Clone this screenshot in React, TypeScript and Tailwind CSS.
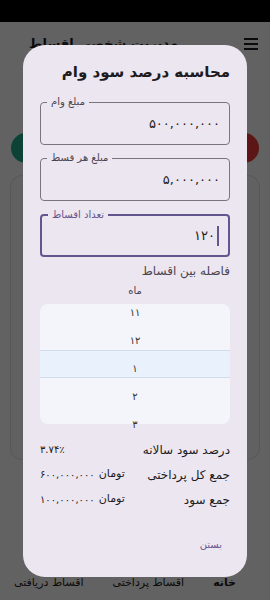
import React from 'react';

const font = { fontFamily: '"DejaVu Sans", sans-serif' };

interface FieldProps {
  label: string;
  value: string;
  focused?: boolean;
}

const Field: React.FC<FieldProps> = ({ label, value, focused }) => (
  <div
    className={`relative h-[43px] rounded-[4px] ${
      focused ? 'border-2 border-[#65558f]' : 'border border-[#79747e]'
    }`}
  >
    <span
      className={`absolute top-[-9px] left-[6px] px-[4px] bg-[#ece6f0] text-[10px] leading-[16px] ${
        focused ? 'text-[#65558f]' : 'text-[#49454f]'
      }`}
    >
      {label}
    </span>
    <div dir="ltr" className="flex h-full items-center justify-end pr-[9px]">
      <span className="text-[13px] text-[#1d1b20]">{value}</span>
      {focused && <span className="ml-[2px] h-[20px] w-[2px] bg-[#65558f]" />}
    </div>
  </div>
);

const ResultRow: React.FC<{ label: string; value: string; unit?: string }> = ({ label, value, unit }) => (
  <div className="flex h-[25px] items-center justify-between">
    <span className="text-[12px] text-[#1d1b20]">{label}</span>
    <span dir="ltr" className="flex items-center gap-[4px] text-[10px] text-[#1d1b20]">
      <span>{value}</span>
      {unit && <span className="text-[11px]">{unit}</span>}
    </span>
  </div>
);

const months = ['۱۱', '۱۲', '۱', '۲', '۳'];

export default function App() {
  return (
    <div className="relative h-[600px] w-[270px] overflow-hidden bg-[#f6f5f7]" style={font}>
      {/* status bar */}
      <div className="h-[22px] bg-black" />

      {/* app underneath */}
      <div dir="rtl" className="flex h-[44px] items-center px-[12px]">
        <div className="flex w-[14px] flex-col gap-[3px]">
          <span className="h-[2px] bg-[#1d1b20]" />
          <span className="h-[2px] bg-[#1d1b20]" />
          <span className="h-[2px] bg-[#1d1b20]" />
        </div>
        <span className="mr-[66px] text-[13px] font-bold text-[#1d1b20]">مدیریت شخصی اقساط</span>
      </div>

      <div className="mt-[67px] flex justify-between px-[11px]">
        <div className="h-[30px] w-[30px] rounded-full bg-[#22a589]" />
        <div className="h-[30px] w-[30px] rounded-full bg-[#e53935]" />
      </div>

      <div className="mx-[10px] mt-[12px] h-[285px] rounded-[12px] border border-[#d9d6dc] bg-[#f3f2f5]" />

      <div dir="rtl" className="absolute bottom-0 left-0 right-0 flex h-[34px] items-center justify-between pl-[14px] pr-[34px] text-[11px] text-[#1d1b20]">
        <span className="font-bold">خانه</span>
        <span>اقساط پرداختی</span>
        <span>اقساط دریافتی</span>
      </div>

      {/* scrim + dialog */}
      <div className="absolute bottom-0 left-0 right-0 top-[22px] flex items-center justify-center bg-black/60">
        <div dir="rtl" className="flex h-[532px] w-[224px] flex-col rounded-[22px] bg-[#ece6f0] px-[17px] pt-[16px]">
          <h2 className="text-[15px] font-bold leading-[22px] text-[#1d1b20]">محاسبه درصد سود وام</h2>

          <div className="mt-[19px] flex flex-col gap-[13px]">
            <Field label="مبلغ وام" value="۵۰۰,۰۰۰,۰۰۰" />
            <Field label="مبلغ هر قسط" value="۵,۰۰۰,۰۰۰" />
            <Field label="تعداد اقساط" value="۱۲۰" focused />
          </div>

          <p className="mt-[6px] text-[12px] leading-[16px] text-[#49454f]">فاصله بین اقساط</p>
          <p className="mt-[4px] text-center text-[10px] leading-[16px] text-[#49454f]">ماه</p>

          <div className="relative mt-[5px] h-[120px] rounded-[8px] bg-[#f3f5fa]">
            <div className="absolute left-0 right-0 top-[46px] h-[28px] border-y border-[#d4dceb] bg-[#e9f1fd]" />
            <div className="relative -mt-[6px] flex flex-col">
              {months.map((m) => (
                <div key={m} className="flex h-[28px] items-center justify-center text-[10px] text-[#333333]">
                  {m}
                </div>
              ))}
            </div>
          </div>

          <div className="mt-[13px] flex flex-col">
            <ResultRow label="درصد سود سالانه" value="۳.۷۴٪" />
            <ResultRow label="جمع کل پرداختی" value="۶۰۰,۰۰۰,۰۰۰" unit="تومان" />
            <ResultRow label="جمع سود" value="۱۰۰,۰۰۰,۰۰۰" unit="تومان" />
          </div>

          <div className="mt-[25px] flex justify-start pr-[8px]">
            <span className="text-[10px] text-[#65558f]">بستن</span>
          </div>
        </div>
      </div>
    </div>
  );
}
